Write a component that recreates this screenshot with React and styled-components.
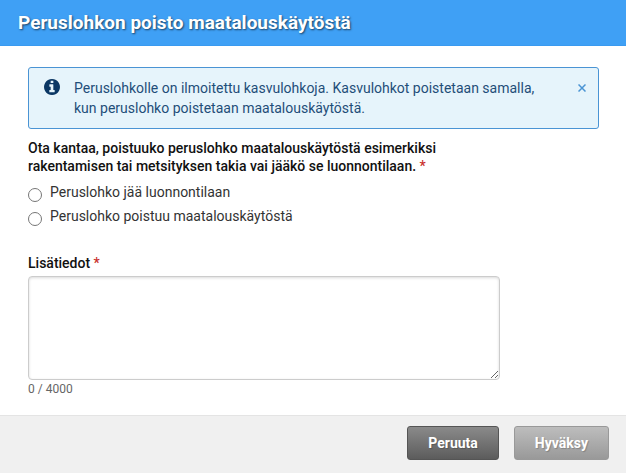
import React, { useState } from 'react';
import styled, { createGlobalStyle } from 'styled-components';

const MAX_LENGTH = 4000;

const GlobalStyle = createGlobalStyle`
    * {
        box-sizing: border-box;
    }
    body {
        margin: 0;
        background: #ffffff;
        color: #111111;
        font-family: Roboto, "Liberation Sans", sans-serif;
        font-size: 14px;
        line-height: 18px;
    }
`;

const Dialog = styled.form`
    display: flex;
    flex-direction: column;
    min-height: 100vh;
`;

const Header = styled.header`
    padding: 12px 18px;
    background: #3fa0f5;
    border-bottom: 1px solid #3a9af0;
`;

const Title = styled.h1`
    margin: 0;
    color: #ffffff;
    font-size: 19px;
    font-weight: 700;
    line-height: 21px;
    text-shadow: 1px 1px 2px rgba(0, 0, 0, 0.6);
`;

const Content = styled.main`
    flex: 1;
    padding: 21px 27px 17px 28px;
`;

const InfoBox = styled.div`
    display: flex;
    align-items: flex-start;
    padding: 10px;
    border: 1px solid #4a94d4;
    border-radius: 3px;
    background: #e6f4fb;
    color: #1f4e79;
    line-height: 20px;
`;

const InfoIcon = styled.svg`
    flex: none;
    width: 16px;
    height: 16px;
    margin: 1px 14px 0 5px;
    fill: #0b3764;
`;

const InfoText = styled.p`
    flex: 1;
    max-width: 480px;
    margin: 0;
`;

const CloseButton = styled.button`
    flex: none;
    display: flex;
    margin-left: auto;
    padding: 6px 2px;
    border: 0;
    background: none;
    color: #4a94d4;
    cursor: pointer;
`;

const Group = styled.fieldset`
    max-width: 440px;
    margin: 10px 0 23px;
    padding: 0;
    border: 0;
`;

const Legend = styled.legend`
    margin-bottom: 8px;
    padding: 0;
    font-weight: 500;
`;

const Required = styled.span`
    color: #c9302c;
`;

const Option = styled.label`
    display: flex;
    align-items: flex-start;
    height: 24px;
    color: #333333;
`;

const Radio = styled.input`
    appearance: none;
    flex: none;
    width: 14px;
    height: 14px;
    margin: 5px 8px 0 0;
    border: 1px solid #767676;
    border-radius: 50%;
    background: #ffffff;

    &:checked {
        border: 4px solid #3fa0f5;
    }
`;

const Field = styled.div`
    display: flex;
    flex-direction: column;
    max-width: 472px;
`;

const FieldLabel = styled.label`
    margin-bottom: 4px;
    font-weight: 500;
`;

const TextArea = styled.textarea`
    height: 104px;
    padding: 6px;
    border: 1px solid #cccccc;
    border-radius: 4px;
    box-shadow: inset 0 1px 3px rgba(0, 0, 0, 0.15);
    font: inherit;
    resize: both;
`;

const Counter = styled.span`
    color: #666666;
    font-size: 12px;
`;

const Footer = styled.footer`
    display: flex;
    justify-content: flex-end;
    gap: 15px;
    padding: 10px 17px 13px;
    border-top: 1px solid #e4e4e4;
    background: #f0f0f0;
`;

const Button = styled.button`
    height: 34px;
    padding: 0 20px;
    border: 1px solid ${({ $muted }) => ($muted ? '#999999' : '#555555')};
    border-radius: 3px;
    background: ${({ $muted }) => ($muted
        ? 'linear-gradient(#bdbdbd, #999999)'
        : 'linear-gradient(#8a8a8a, #5c5c5c)')};
    color: #ffffff;
    font-family: inherit;
    font-size: 14px;
    font-weight: 700;
    text-shadow: 1px 1px 1px rgba(0, 0, 0, 0.2);
`;

const InfoMessage = ({ children, onClose }) => (
    <InfoBox role='status'>
        <InfoIcon viewBox='0 128 1536 1536' aria-hidden='true'>
            <path d='M1024 1376v-160q0-14-9-23t-23-9h-96v-512q0-14-9-23t-23-9h-320q-14 0-23 9t-9 23v160q0 14 9 23t23 9h96v320h-96q-14 0-23 9t-9 23v160q0 14 9 23t23 9h448q14 0 23-9t9-23zm-128-896v-160q0-14-9-23t-23-9h-192q-14 0-23 9t-9 23v160q0 14 9 23t23 9h192q14 0 23-9t9-23zm640 416q0 209-103 385.5t-279.5 279.5-385.5 103-385.5-103-279.5-279.5-103-385.5 103-385.5 279.5-279.5 385.5-103 385.5 103 279.5 279.5 103 385.5z' />
        </InfoIcon>
        <InfoText>{children}</InfoText>
        <CloseButton type='button' aria-label='Sulje' onClick={onClose}>
            <svg width='8' height='8' viewBox='0 0 8 8' aria-hidden='true'>
                <path d='M0.5 0.5 L7.5 7.5 M7.5 0.5 L0.5 7.5' stroke='currentColor' strokeWidth='1.5' />
            </svg>
        </CloseButton>
    </InfoBox>
);

const App = () => {
    const [infoVisible, setInfoVisible] = useState(true);
    const [reason, setReason] = useState(null);
    const [details, setDetails] = useState('');

    return (
        <Dialog onSubmit={(e) => e.preventDefault()}>
            <GlobalStyle />
            <Header>
                <Title>Peruslohkon poisto maatalouskäytöstä</Title>
            </Header>
            <Content>
                {infoVisible &&
                    <InfoMessage onClose={() => setInfoVisible(false)}>
                        Peruslohkolle on ilmoitettu kasvulohkoja. Kasvulohkot poistetaan samalla,
                        kun peruslohko poistetaan maatalouskäytöstä.
                    </InfoMessage>
                }
                <Group>
                    <Legend>
                        Ota kantaa, poistuuko peruslohko maatalouskäytöstä esimerkiksi
                        rakentamisen tai metsityksen takia vai jääkö se luonnontilaan. <Required>*</Required>
                    </Legend>
                    <Option>
                        <Radio type='radio' name='reason' checked={reason === 'natural'} onChange={() => setReason('natural')} />
                        Peruslohko jää luonnontilaan
                    </Option>
                    <Option>
                        <Radio type='radio' name='reason' checked={reason === 'removed'} onChange={() => setReason('removed')} />
                        Peruslohko poistuu maatalouskäytöstä
                    </Option>
                </Group>
                <Field>
                    <FieldLabel htmlFor='details'>Lisätiedot <Required>*</Required></FieldLabel>
                    <TextArea
                        id='details'
                        maxLength={MAX_LENGTH}
                        value={details}
                        onChange={(e) => setDetails(e.target.value)}
                    />
                    <Counter>{details.length} / {MAX_LENGTH}</Counter>
                </Field>
            </Content>
            <Footer>
                <Button type='button'>Peruuta</Button>
                <Button type='submit' $muted>Hyväksy</Button>
            </Footer>
        </Dialog>
    );
};

export default App;
